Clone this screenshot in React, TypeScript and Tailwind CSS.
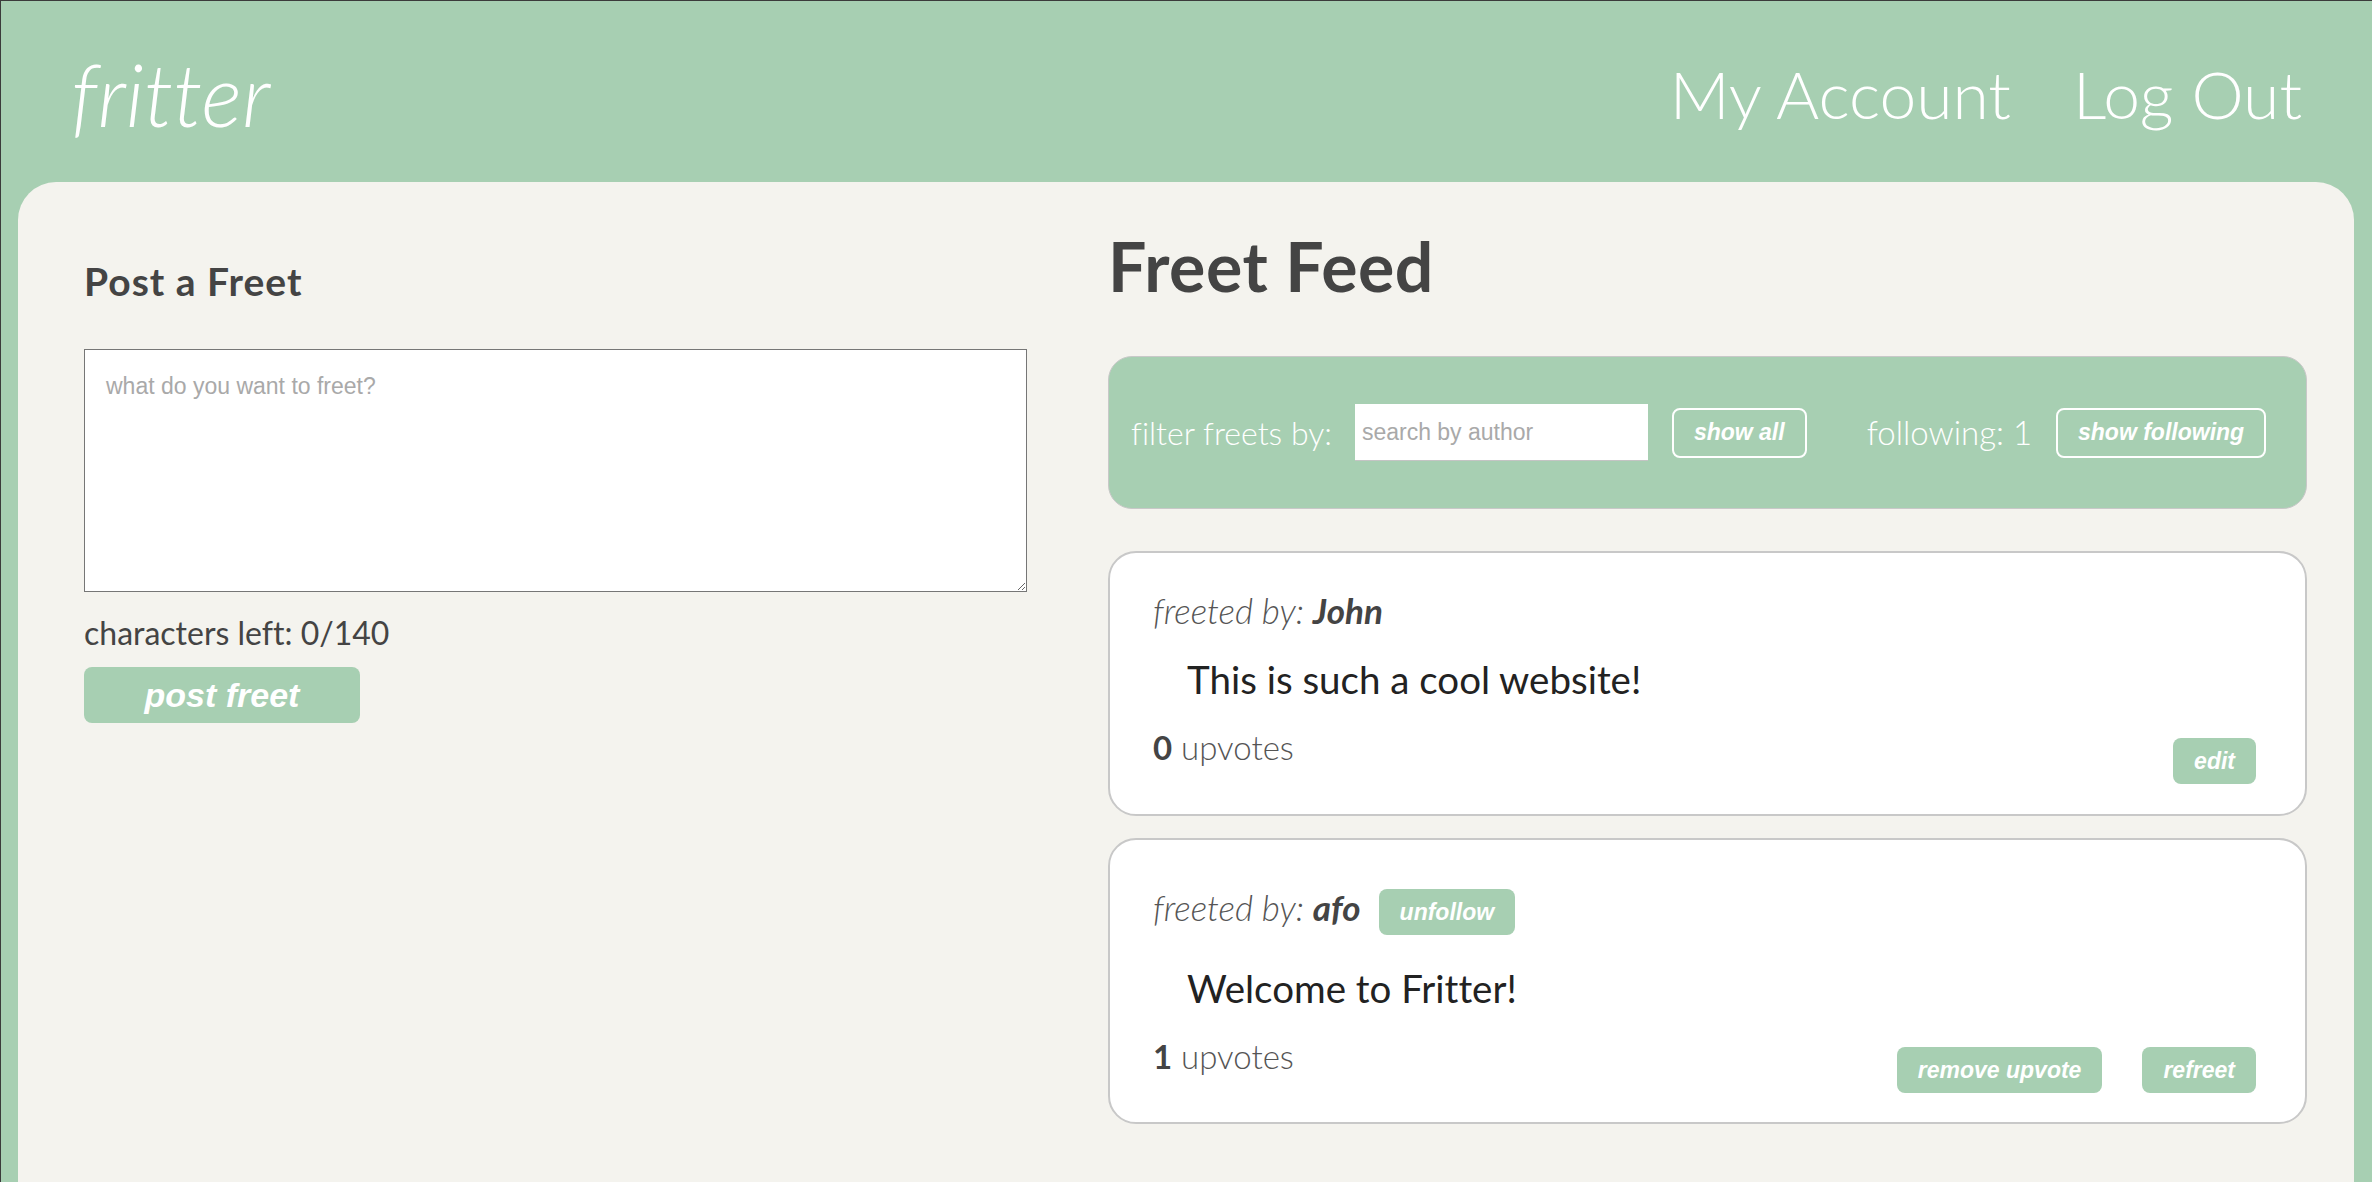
import React from "react"

const btnFont = "[font-family:'Liberation_Sans',Arial,sans-serif]"

function GreenButton({ label, className = "" }: { label: string; className?: string }) {
  return (
    <button
      className={`h-[46px] px-[21px] rounded-[8px] bg-[#a7cfb2] text-white text-[23px] font-bold italic ${btnFont} ${className}`}
    >
      {label}
    </button>
  )
}

function OutlineButton({ label, className = "" }: { label: string; className?: string }) {
  return (
    <button
      className={`h-[50px] px-[20px] rounded-[8px] border-2 border-white text-white text-[23px] font-bold italic ${btnFont} ${className}`}
    >
      {label}
    </button>
  )
}

function Author({ name }: { name: string }) {
  return (
    <div className="h-[40px] leading-[40px] text-[35px] italic font-light text-[#555] whitespace-nowrap">
      freeted by: <span className="font-bold text-[#444]">{name}</span>
    </div>
  )
}

function Upvotes({ count }: { count: number }) {
  return (
    <span className="text-[33px] leading-[40px] font-light text-[#555]">
      <span className="font-bold text-[#444]">{count}</span> upvotes
    </span>
  )
}

export default function App() {
  return (
    <div className="min-h-screen flex flex-col bg-[#a7cfb2] border-t border-l border-[#3b3b3b] [font-family:Lato,sans-serif] [font-variant-ligatures:none]">
      <header className="h-[181px] shrink-0 flex items-center justify-between pt-[4px] pl-[70px] pr-[70px] text-white">
        <span className="text-[86px] leading-none italic font-light">fritter</span>
        <nav className="flex gap-[62px] text-[66px] leading-none font-light">
          <a>My Account</a>
          <a>Log Out</a>
        </nav>
      </header>

      <main className="flex-1 flex ml-[17px] mr-[18px] pl-[66px] pr-[47px] rounded-t-[38px] bg-[#f4f3ee]">
        {/* post form */}
        <section className="w-[943px] shrink-0 pt-[80px]">
          <h2 className="text-[39px] leading-none font-bold tracking-[1px] text-[#444]">Post a Freet</h2>
          <textarea
            placeholder="what do you want to freet?"
            className={`block mt-[48px] w-full h-[243px] border border-[#767676] bg-white pl-[21px] pr-[21px] pt-[23px] text-[23px] leading-[26px] text-[#333] placeholder:text-[#a9a9a9] outline-none ${btnFont}`}
          />
          <p className="mt-[22px] text-[32px] leading-[38px] text-[#444]">characters left: 0/140</p>
          <button
            className={`mt-[15px] w-[276px] h-[56px] rounded-[8px] bg-[#a7cfb2] text-white text-[34px] font-bold italic ${btnFont}`}
          >
            post freet
          </button>
        </section>

        {/* feed */}
        <section className="ml-[81px] w-[1199px] pt-[50px]">
          <h1 className="text-[68px] leading-none font-bold tracking-[0.5px] text-[#444]">Freet Feed</h1>

          <div className="mt-[56px] h-[153px] flex items-center pl-[22px] rounded-[24px] border border-[#c8c8c8] bg-[#a7cfb2] text-white">
            <span className="text-[32px] font-light whitespace-nowrap">filter freets by:</span>
            <input
              placeholder="search by author"
              className={`ml-[23px] w-[293px] h-[57px] bg-white px-[7px] text-[23px] text-[#333] placeholder:text-[#a9a9a9] border-b border-[#c4c4c4] outline-none ${btnFont}`}
            />
            <OutlineButton label="show all" className="ml-[24px]" />
            <span className="ml-[60px] text-[33px] font-light whitespace-nowrap">following: 1</span>
            <OutlineButton label="show following" className="ml-[24px]" />
          </div>

          <div className="mt-[42px] flex flex-col gap-[22px]">
            <article className="bg-white border-2 border-[#c8c8c8] rounded-[28px] pl-[43px] pr-[49px] pt-[37px] pb-[30px]">
              <Author name="John" />
              <p className="mt-[24px] ml-[34px] text-[38.5px] leading-[50px] text-[#222]">This is such a cool website!</p>
              <div className="mt-[23px] flex justify-between items-start">
                <Upvotes count={0} />
                <div className="mt-[11px] flex">
                  <GreenButton label="edit" className="h-[45px]" />
                </div>
              </div>
            </article>

            <article className="bg-white border-2 border-[#c8c8c8] rounded-[28px] pl-[43px] pr-[49px] pt-[47px] pb-[29px]">
              <div className="flex items-start">
                <Author name="afo" />
                <GreenButton label="unfollow" className="mt-[2px] ml-[18px]" />
              </div>
              <p className="mt-[28px] ml-[34px] text-[38.5px] leading-[50px] text-[#222]">Welcome to Fritter!</p>
              <div className="mt-[23px] flex justify-between items-start">
                <Upvotes count={1} />
                <div className="mt-[11px] flex gap-[40px]">
                  <GreenButton label="remove upvote" />
                  <GreenButton label="refreet" />
                </div>
              </div>
            </article>
          </div>
        </section>
      </main>
    </div>
  )
}
